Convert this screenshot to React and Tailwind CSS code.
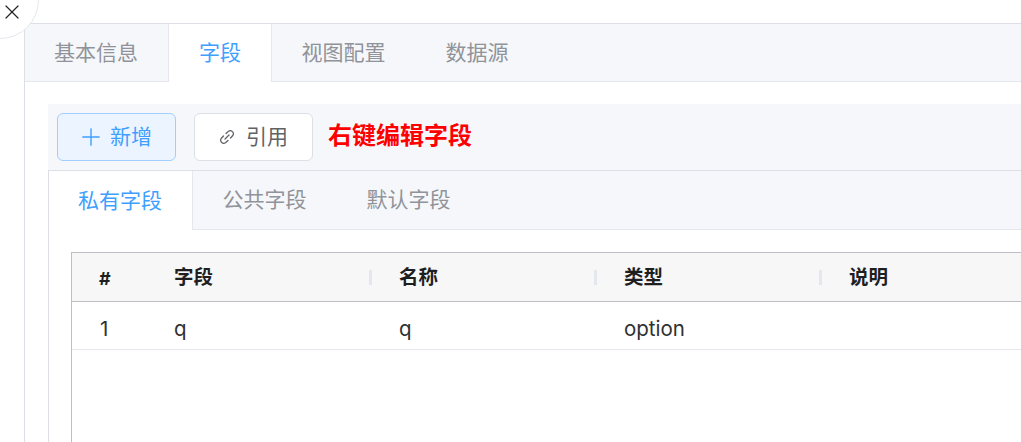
import { Plus, X } from "lucide-react";

const font = { cjk: "font-['Inter','Noto_Sans_CJK_SC',sans-serif]" };

const Tab = ({ label, height }) => (
  <div className={`flex items-center pl-[29.5px] pr-[30.5px] text-[#909399] ${height}`}>{label}</div>
);

const Sep = () => <span className="w-[3px] h-[15px] bg-[#e4e8ee] shrink-0" />;

const LinkIcon = () => (
  <svg width="16" height="16" viewBox="0 0 16 16" fill="none" stroke="currentColor" strokeWidth="1.3" strokeLinecap="round">
    <path d="M7 4.5 L9.5 2.2 a3.1 3.1 0 0 1 4.3 4.3 L11.5 9" />
    <path d="M9 11.5 L6.5 13.8 a3.1 3.1 0 0 1 -4.3 -4.3 L4.5 7" />
    <path d="M6 10 L10 6" />
  </svg>
);

const App = () => {
  return (
    <div className={`relative w-[1021px] h-[442px] overflow-hidden bg-white ${font.cjk}`}>
      {/* close */}
      <div className="absolute -left-[39px] -top-[39px] w-[78px] h-[78px] rounded-full border border-[#e4e7ed] bg-white z-10">
        <X className="absolute left-[38px] top-[38px] text-[#222]" size={24} strokeWidth={1.2} />
      </div>

      <div className="pt-[23px] pl-6">
        <div className="border-l border-t border-[#dcdfe6] h-[419px]">
          {/* tabs */}
          <div className="flex h-[58px] bg-[#f5f7fa] border-b border-[#e4e7ed] text-[21px]">
            <div className="flex items-center pl-[29px] pr-[30px] text-[#909399] border-r border-[#e4e7ed]">基本信息</div>
            <div className="flex items-center px-[30px] bg-white text-[#409eff] border-r border-[#e4e7ed] h-[58px]">字段</div>
            <Tab label="视图配置" height="h-[57px]" />
            <Tab label="数据源" height="h-[57px]" />
          </div>

          <div className="pl-[23px] pt-[22px]">
            {/* toolbar */}
            <div className="flex items-center h-[66px] bg-[#f5f7fa] pl-[9px]">
              <button className="flex items-center justify-center w-[119px] h-12 rounded-[6px] border border-[#a0cfff] bg-[#ecf5ff] text-[#409eff] text-[21px] gap-[9px]">
                <Plus size={28} strokeWidth={1.2} className="-mx-1" />
                新增
              </button>
              <button className="flex items-center justify-center w-[119px] h-12 ml-[18px] rounded-[6px] border border-[#dcdfe6] bg-white text-[#606266] text-[21px] gap-[11px]">
                <LinkIcon />
                引用
              </button>
              <span className="ml-[15px] pb-[2px] text-[24px] font-bold text-[#ff0000]">右键编辑字段</span>
            </div>

            {/* inner card */}
            <div className="border-l border-t border-[#dcdfe6] h-[272px]">
              <div className="flex h-[59px] bg-[#f5f7fa] border-b border-[#e4e7ed] text-[21px]">
                <div className="flex items-center pl-[29px] pr-[30px] bg-white text-[#409eff] border-r border-[#e4e7ed] h-[59px]">私有字段</div>
                <Tab label="公共字段" height="h-[58px]" />
                <Tab label="默认字段" height="h-[58px]" />
              </div>

              <div className="pl-[22px] pt-[22px]">
                <div className="border-l border-t border-[#bcbfc6] h-[190px]">
                  <div className="flex items-center h-[49px] bg-[#f7f7f8] border-b border-[#bcbfc6] text-[19.5px] font-bold text-[#1f1f1f]">
                    <span className="w-[102px] pl-[27px] pt-[2px] text-[18px]">#</span>
                    <div className="flex items-center w-[225px]">
                      <span className="w-[195px] pt-[2px]">字段</span>
                      <Sep />
                    </div>
                    <div className="flex items-center w-[225px]">
                      <span className="w-[195px] pt-[2px]">名称</span>
                      <Sep />
                    </div>
                    <div className="flex items-center w-[225px]">
                      <span className="w-[195px] pt-[2px]">类型</span>
                      <Sep />
                    </div>
                    <span className="pt-[2px]">说明</span>
                  </div>
                  <div className="flex items-center h-[48px] pt-[8px] border-b border-[#e4e7ed] text-[20.5px] text-[#303133]">
                    <span className="w-[102px] pl-[28px]">1</span>
                    <span className="w-[225px]">q</span>
                    <span className="w-[225px]">q</span>
                    <span className="w-[225px]">option</span>
                  </div>
                </div>
              </div>
            </div>
          </div>
        </div>
      </div>
    </div>
  );
};

export default App;
